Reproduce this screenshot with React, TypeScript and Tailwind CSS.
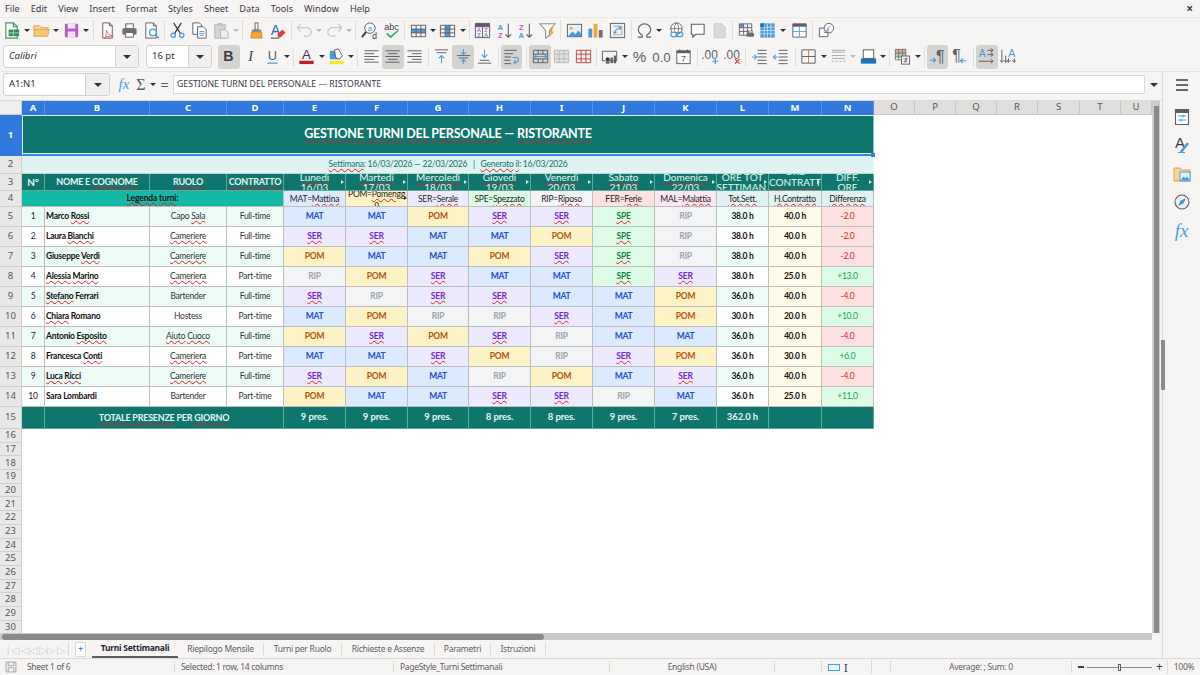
import type { ReactNode } from "react";

const gray = "#5e5c64";
const blue = "#4a9bdc";

const p = (d: string, c = gray, w = 1.2, f = "none") => <path d={d} stroke={c} strokeWidth={w} fill={f} />;
const lbl = (s: string, x: number, y: number, size: number, c = gray, weight = 400, style = "normal") => (
  <text x={x} y={y} fontSize={size} fill={c} fontWeight={weight} fontStyle={style} fontFamily="Liberation Sans, sans-serif" textAnchor="middle">
    {s}
  </text>
);
const table = (c = gray) => p("M2.5 4.5h15v12h-15zM2.5 8.5h15M2.5 12.5h15M7.5 4.5v12M12.5 4.5v12", c, 1);

const icons: Record<string, ReactNode> = {
  new: (
    <>
      {p("M4 2h8l4 4v12H4zM12 2v4h4", "#3d9a5f", 1.2, "#fff")}
      <rect x="7" y="9" width="11" height="7" fill="#2f8f57" />
      {p("M7 12.5h11M12 9v7", "#bfe6cc", 0.8)}
    </>
  ),
  open: (
    <>
      {p("M2 5h6l2 2h7v3H2z", "#e3a23c", 1, "#f8d49a")}
      {p("M2 16l1-7h15l-1.500 7z", "#e3a23c", 1, "#f9c77c")}
    </>
  ),
  save: (
    <>
      <rect x="3" y="3" width="14" height="14" rx="1" fill="#b45fc6" />
      <rect x="6" y="3" width="8" height="5" fill="#f6e3fa" />
      <rect x="6" y="11" width="8" height="6" fill="#f6e3fa" />
    </>
  ),
  pdf: (
    <>
      {p("M5 2h7l3 3v13H5zM12 2v3h3", gray, 1, "#fff")}
      {p("M9 10c1 3 3 5 7 6-3 0-6 0-9 2 1-2 2-5 2-8z", "#d9534f", 0.9)}
    </>
  ),
  print: (
    <>
      <rect x="6" y="3" width="8" height="5" fill="#fff" stroke={gray} />
      <rect x="2.500" y="7.500" width="15" height="7" rx="1.500" fill="#6a7078" />
      <rect x="6" y="12" width="8" height="5" fill="#fff" stroke={gray} />
    </>
  ),
  preview: (
    <>
      {p("M4 2h8l3 3v13H4zM12 2v3h3", gray, 1, "#fff")}
      <circle cx="11.500" cy="12" r="3.500" fill="#fff" stroke={blue} strokeWidth="1.300" />
      {p("M14 14.500l3.500 3.500", blue, 1.700)}
    </>
  ),
  cut: (
    <>
      {p("M6 2l7 11M14 2L7 13", "#3d3846", 1.300)}
      <circle cx="5.500" cy="15" r="2.300" fill="none" stroke={blue} strokeWidth="1.300" />
      <circle cx="14.500" cy="15" r="2.300" fill="none" stroke={blue} strokeWidth="1.300" />
    </>
  ),
  copy: (
    <>
      {p("M3 2h7l2 2v10H3z", gray, 1, "#fff")}
      {p("M8 6h6l3 3v9H8z", gray, 1, "#fff")}
      {p("M10 11h5M10 13h5M10 15h5", blue, 1)}
    </>
  ),
  paste: (
    <>
      <rect x="3" y="4" width="11" height="14" fill="#d5d5d5" stroke="#b5b5b5" />
      <rect x="6" y="2" width="5" height="3" fill="#c0c0c0" />
      <path d="M9 9h5l3 3v6H9z" fill="#eeeeee" stroke="#b5b5b5" />
    </>
  ),
  clone: (
    <>
      <rect x="8.500" y="2" width="3" height="7" fill="#fff" stroke={gray} />
      <rect x="5" y="9" width="10" height="2.500" fill="#8a8a8a" />
      <path d="M5 11.500h10l1 6.500H4z" fill="#f2a93b" stroke="#c87f14" strokeWidth="0.800" />
    </>
  ),
  clear: (
    <>
      {lbl("A", 8, 15, 15, "#2f6fb0")}
      <path d="M10 14l5-5 3.500 3-5 5h-3z" fill="#e0403c" />
      {p("M3 18h9", "#3d3846", 1)}
    </>
  ),
  undo: p("M6 3L2.500 7 6 11M3 7h9c3 0 5 2 5 4.500S15 16 12 16H9", "#c9c9c9", 1.400),
  redo: p("M14 3l3.500 4L14 11M17 7H8c-3 0-5 2-5 4.500S5 16 8 16h3", "#c9c9c9", 1.400),
  find: (
    <>
      <circle cx="10.500" cy="7.500" r="5.500" fill="#fff" stroke={gray} />
      {lbl("a", 10.500, 10.500, 8, "#3584e4")}
      {p("M6.500 11.500L2 17", "#3d3846", 2)}
      {lbl("d", 15.500, 18.500, 9, "#3d3846")}
    </>
  ),
  spell: (
    <>
      {lbl("abc", 10, 9, 9.500, "#3d3846")}
      {p("M5 13l4 4 8-7", "#2ea567", 1.600)}
    </>
  ),
  rows: (
    <>
      <rect x="2.500" y="8.500" width="15" height="4" fill={blue} />
      {table()}
    </>
  ),
  cols: (
    <>
      <rect x="7.500" y="4.500" width="5" height="12" fill={blue} />
      {table()}
    </>
  ),
  sort: (
    <>
      {p("M2.500 2.500h15v15h-15zM2.500 6h15M10 6v11.500", gray, 1)}
      <rect x="2.500" y="2.500" width="15" height="3.500" fill="#5e5c64" />
      {lbl("A", 6.300, 11.500, 6, "#c061cb", 700)}
      {lbl("Z", 6.300, 17, 6, "#4a9bdc", 700)}
      {lbl("Z", 13.800, 11.500, 6, "#c061cb", 700)}
      {lbl("A", 13.800, 17, 6, "#4a9bdc", 700)}
    </>
  ),
  asc: (
    <>
      {lbl("A", 5.500, 9, 8, blue, 700)}
      {lbl("Z", 5.500, 18, 8, "#c061cb", 700)}
      {p("M14 3v14M11 14l3 3 3-3", gray, 1.100)}
    </>
  ),
  desc: (
    <>
      {lbl("Z", 5.500, 9, 8, "#c061cb", 700)}
      {lbl("A", 5.500, 18, 8, blue, 700)}
      {p("M14 3v14M11 14l3 3 3-3", gray, 1.100)}
    </>
  ),
  filter: (
    <>
      {p("M2 3h16l-6 7v5l-4 3v-8z", "#8f8f8f", 1.100, "#fff")}
      <path d="M14 7l-3 5h2.500L12 17l5-6h-2.500l1.500-4z" fill="#f0a030" />
    </>
  ),
  image: (
    <>
      <rect x="2.500" y="3.500" width="15" height="13" fill="#e4f1fb" stroke={gray} />
      <circle cx="6.500" cy="7.500" r="1.600" fill="#f2b33d" />
      <path d="M3 16l5-5 3 3 3-4 3.500 4v2z" fill={blue} />
    </>
  ),
  chart: (
    <>
      <rect x="2.500" y="8" width="4" height="9.500" fill={blue} />
      <rect x="8" y="3" width="4" height="14.500" fill="#f2a93b" />
      <rect x="13.500" y="9.500" width="4" height="8" fill="#6a7078" />
    </>
  ),
  pivot: (
    <>
      <rect x="2.500" y="2.500" width="15" height="15" fill="#f2f2f2" stroke={gray} />
      {p("M5.500 5.500h9v9h-9", "#a8a8a8", 1)}
      {p("M7 13c0-3 2-5 6-6M11 5.500L13.500 7 12 9.500M7 13l2-1.500M7 13l-1.500-2", blue, 1.100)}
    </>
  ),
  omega: p("M3 17h4.500v-2.200C5 13.500 3.500 11.300 3.500 9c0-3.500 3-6 6.500-6s6.500 2.500 6.500 6c0 2.300-1.500 4.500-4 5.800V17H17", gray, 1.200),
  link: (
    <>
      <circle cx="10" cy="8" r="6" fill="#fff" stroke={gray} />
      {p("M4 8h12M10 2c-3 3-3 9 0 12M10 2c3 3 3 9 0 12", gray, 0.800)}
      <rect x="4" y="12" width="7" height="4.500" rx="2.200" fill="#fff" stroke={blue} strokeWidth="1.300" />
      <rect x="9.500" y="12" width="7" height="4.500" rx="2.200" fill="none" stroke={blue} strokeWidth="1.300" />
    </>
  ),
  comment: p("M3.500 3.500h13.500v10.500H8L5 17v-3H3.500z", gray, 1.100, "#fff"),
  hdr: <path d="M4.500 3h8l3.500 3.500V17.500h-11.500z" fill="#d9d9d9" stroke="#c6c6c6" />,
  area: (
    <>
      <rect x="2.500" y="3" width="4.500" height="4" fill={blue} />
      {p("M2.500 3h13v12h-13zM2.500 7h13M2.500 11h13M7 3v12M11 3v12", gray, 0.900)}
      <rect x="10" y="12.500" width="8" height="4" rx="1" fill="#6a7078" />
      <rect x="12" y="10.500" width="4" height="2" fill="#fff" stroke={gray} strokeWidth="0.700" />
    </>
  ),
  freeze: (
    <>
      <rect x="2.500" y="2.500" width="15" height="15" fill="#4a9bdc" />
      {p("M2.500 6.500h15M2.500 10h15M2.500 13.500h15M6.500 2.500v15M10 2.500v15M13.500 2.500v15", "#cfe6f7", 0.800)}
      <rect x="2.500" y="2.500" width="4" height="4" fill="#1c71b8" />
    </>
  ),
  split: (
    <>
      {p("M3 3h14v14H3z", gray, 1, "#fff")}
      <rect x="3" y="3" width="14" height="3" fill="#5e5c64" />
      {p("M3 11h14M10 6v11", blue, 0.900)}
    </>
  ),
  shapes: (
    <>
      {p("M2.500 7.500h9v9h-9z", gray, 1, "#fff")}
      <circle cx="12.500" cy="7.500" r="5" fill="#fff" stroke={gray} />
      {p("M11.500 7.500v4.500H7.500", gray, 0.900)}
      {p("M9.500 10l5-5", blue, 1)}
    </>
  ),
  bold: lbl("B", 10, 15, 15, "#3d3846", 700),
  italic: <text x="10" y="15" fontSize="15" fill="#3d3846" fontStyle="italic" fontFamily="Liberation Serif, serif" textAnchor="middle">I</text>,
  under: (
    <>
      {lbl("U", 10, 14, 13.500, gray)}
      {p("M4.500 17h11", blue, 1.300)}
    </>
  ),
  color: (
    <>
      {lbl("A", 10, 13, 14, "#3d3846")}
      <rect x="2.500" y="14.500" width="15" height="3.500" fill="#c01c28" />
    </>
  ),
  bg: (
    <>
      <path d="M3 4h8v9H3z" fill="#4a9bdc" />
      <path d="M8 3l4-1 4 7-3 4-4-2z" fill="#fff" stroke={gray} />
      <rect x="2.500" y="14.500" width="15" height="3.500" fill="#f6e82c" />
    </>
  ),
  left: p("M2.500 4h15M2.500 7h10M2.500 10h15M2.500 13h10M2.500 16h15", gray, 1),
  center: p("M2.500 4h15M5 7h10M2.500 10h15M5 13h10M2.500 16h15", gray, 1),
  right: p("M2.500 4h15M7.500 7h10M2.500 10h15M7.500 13h10M2.500 16h15", gray, 1),
  top: (
    <>
      {p("M3 3h14M5 6h10", gray, 1)}
      {p("M10 17V9M7 12l3-3 3 3", blue, 1.100)}
    </>
  ),
  mid: (
    <>
      {p("M3 9h14M5 11.500h10", gray, 1)}
      {p("M10 2v6M7.500 5.500L10 8l2.500-2.500M10 18v-5M7.500 15.500L10 13l2.500 2.500", blue, 1.100)}
    </>
  ),
  bottom: (
    <>
      {p("M5 14h10M3 17h14", gray, 1)}
      {p("M10 3v8M7 8l3 3 3-3", blue, 1.100)}
    </>
  ),
  wrap: (
    <>
      {p("M2.500 3.500h13M2.500 7h9M2.500 10.500h7M2.500 14h6M2.500 17.500h7", gray, 1)}
      {p("M11 11h4c3 0 3 5 0 5h-2M14.500 14l-2 2 2 2", blue, 1.100)}
    </>
  ),
  merge: (
    <>
      {p("M2.500 3.500h15v13h-15zM2.500 7.500h15M2.500 12.500h15M7.500 3.500v4M12.500 3.500v4M7.500 12.500v4M12.500 12.500v4", gray, 1)}
      {p("M3.500 10h13M6 8l-2.500 2L6 12M14 8l2.500 2-2.500 2", blue, 1.100)}
    </>
  ),
  mergeOff: p("M2.500 3.500h15v13h-15zM2.500 7.500h15M2.500 12.500h15M7.500 3.500v13M12.500 3.500v13", "#b8b8b8", 1, "#dedede"),
  unmerge: p("M2.500 3.500h15v13h-15zM2.500 7.500h15M2.500 12.500h15M7.500 3.500v13M12.500 3.500v13", "#c6433f", 1),
  cash: (
    <>
      {p("M1.500 4.500h15v10H9", gray, 1)}
      {p("M1.500 4.500v10h3", gray, 1)}
      <circle cx="7" cy="13" r="2.200" fill="#3d3846" />
      <rect x="10" y="11" width="2.500" height="6" fill="#5e5c64" />
      <rect x="13.500" y="9" width="2.500" height="8" fill="#5e5c64" />
      <rect x="5" y="15" width="4" height="2.500" fill="#5e5c64" />
    </>
  ),
  pct: lbl("%", 10, 16, 16, gray),
  num: lbl("0.0", 10, 15.500, 14, gray),
  date: (
    <>
      <rect x="3" y="4" width="14" height="13.500" fill="#fff" stroke={gray} />
      <rect x="3" y="4" width="14" height="2.500" fill="#5e5c64" />
      {p("M6 2.500v3M14 2.500v3", gray, 1)}
      {lbl("7", 10, 15.500, 9.500, gray)}
    </>
  ),
  decUp: (
    <>
      {lbl(".00", 9, 13, 12.500, gray)}
      {p("M15 12v6M12 15h6", blue, 1.300)}
    </>
  ),
  decDown: (
    <>
      {lbl(".00", 9, 13, 12.500, gray)}
      {p("M12.500 12.500l5 5M17.500 12.500l-5 5", "#e0403c", 1.300)}
    </>
  ),
  indent: (
    <>
      {p("M8 3.500h9.500M8 7h9.500M8 10.500h9.500M8 14h9.500M8 17.500h9.500", gray, 1)}
      {p("M2 10.500h4.500M4.500 8l2.500 2.500L4.500 13", blue, 1.100)}
    </>
  ),
  outdent: (
    <>
      {p("M8 3.500h9.500M8 7h9.500M8 10.500h9.500M8 14h9.500M8 17.500h9.500", gray, 1)}
      {p("M7 10.500H2.500M5 8l-2.500 2.500L5 13", blue, 1.100)}
    </>
  ),
  borders: (
    <>
      {p("M3 3h14v14H3z", gray, 1)}
      {p("M10 3v14", "#d08040", 1)}
      {p("M3 10h14", gray, 1)}
    </>
  ),
  bstyle: p("M3 3.500h14M3 5.500h14M3 9h14M3 12h14M3 15h2M7 15h2M11 15h2M15 15h2", "#a8a8a8", 1),
  bcolor: (
    <>
      <rect x="4.500" y="3" width="11" height="9" fill="#fff" stroke={gray} />
      <rect x="2" y="12" width="16" height="5.500" fill="#1c71b8" />
    </>
  ),
  cond: (
    <>
      <rect x="2.500" y="2.500" width="11" height="4" fill="#e9a6a3" />
      <rect x="2.500" y="6.500" width="11" height="4" fill="#a9d8b5" />
      {p("M2.500 2.500h11v11h-11zM2.500 6.500h11M2.500 10.500h11M6 2.500v11M10 2.500v11", gray, 0.800)}
      <rect x="9" y="9.500" width="8.500" height="8.500" fill="#fff" stroke={gray} />
      {p("M11 12.500h4.500M11 15h4.500M14.500 11l-2 5.500", gray, 0.900)}
    </>
  ),
  ltr: (
    <>
      {lbl("¶", 13, 16, 17, gray)}
      {p("M2 14h6M5.500 11.500L8 14l-2.500 2.500", blue, 1.200)}
    </>
  ),
  rtl: (
    <>
      {lbl("¶", 7, 15, 17, gray)}
      {p("M17 14.500h-6M13.500 12L11 14.500l2.500 2.500", blue, 1.200)}
    </>
  ),
  txtH: (
    <>
      {lbl("A", 5.500, 10, 11, blue)}
      {p("M11 3.500h6M14.500 1.500l2.500 2-2.500 2M11 8h6M14.500 6l2.500 2-2.500 2M2 15h15M14.500 13l2.500 2-2.500 2", gray, 1)}
    </>
  ),
  txtV: (
    <>
      {lbl("A", 13.500, 10, 11, blue)}
      {p("M3 3v13M1 14l2 2 2-2M7 9v7M5 14l2 2 2-2M16 12v4M14 14l2 2 2-2M10 12v4M8 14l2 2 2-2", gray, 1)}
    </>
  ),
};

const bar1 = "new v open v save v _ | _ pdf print preview | cut copy paste w | clone clear | undo w redo w | _ find spell | rows v cols v | sort asc desc filter | image chart pivot | omega v _ _ link comment hdr | area freeze v _ _ split | shapes".split(" ");
const bar2a = "bold* italic under v | color v bg v | left center* right | top mid* bottom | wrap* _ _ | merge* mergeOff unmerge | cash v pct num date _ | decUp decDown | indent outdent _ | borders v bstyle w bcolor v | cond v | ltr* rtl _ | txtH* txtV".split(" ");

function Bar({ items }: { items: string[] }) {
  return (
    <>
      {items.map((it, i) => {
        if (it === "v" || it === "w")
          return (
            <span key={i} className="w-[8px] flex justify-center shrink-0">
              <span className={`border-x-[3px] border-t-[3px] border-x-transparent ${it === "v" ? "border-t-[#2e3436]" : "border-t-[#b8b8b8]"}`} />
            </span>
          );
        if (it === "|")
          return (
            <span key={i} className="w-[5px] h-[20px] flex justify-center shrink-0">
              <span className="w-px h-full bg-[#e2e0dd]" />
            </span>
          );
        if (it === "_") return <span key={i} className="w-[1px] shrink-0" />;
        const active = it.endsWith("*");
        return (
          <span key={i} className={`w-[21.700px] h-[24px] flex items-center justify-center shrink-0 rounded-[3px] ${active ? "bg-[#d5d3d0]" : ""}`}>
            <svg viewBox="0 0 20 20" className="w-[19px] h-[19px]">
              {icons[it.replace("*", "")]}
            </svg>
          </span>
        );
      })}
    </>
  );
}

function T({ s }: { s: string }) {
  return (
    <>
      {s.split("~").map((part, i) =>
        i % 2 ? (
          <span key={i} className="underline decoration-wavy decoration-[#e01b24] decoration-[0.700px] underline-offset-[1px]">
            {part}
          </span>
        ) : (
          part
        ),
      )}
    </>
  );
}

function Combo({ text, width, btn, italic }: { text: string; width: string; btn: string; italic?: boolean }) {
  return (
    <div className={`${width} h-[23px] flex shrink-0 bg-white border border-[#d4d2cf] rounded-[3px] text-[9.500px] text-[#2e3436]`}>
      <div className={`flex-1 flex items-center pl-[5px] ${italic ? "italic" : ""}`}>{text}</div>
      <div className={`${btn} flex items-center justify-center bg-[#f1f0ee] border-l border-[#d4d2cf] rounded-r-[3px]`}>
        <span className="border-x-[4px] border-t-[4px] border-x-transparent border-t-[#2e3436]" />
      </div>
    </div>
  );
}

const shift: Record<string, string> = {
  MAT: "bg-[#dbeafe] text-[#1d4ed8]",
  POM: "bg-[#fef3c7] text-[#b45309]",
  SER: "bg-[#ede9fe] text-[#6d28d9]",
  SPE: "bg-[#dcfce7] text-[#15803d]",
  RIP: "bg-[#f3f4f6] text-[#9ca3af]",
};

const rows = [
  ["Marco ~Rossi~", "Capo ~Sala~", "Full-time", "MAT MAT POM SER SER SPE RIP", "38.0", "40.0", "-2.0"],
  ["Laura ~Bianchi~", "~Cameriere~", "Full-time", "SER SER MAT MAT POM SPE RIP", "38.0", "40.0", "-2.0"],
  ["Giuseppe ~Verdi~", "~Cameriere~", "Full-time", "POM MAT MAT POM SER SPE RIP", "38.0", "40.0", "-2.0"],
  ["~Alessia~ ~Marino~", "~Cameriera~", "Part-time", "RIP POM SER MAT MAT SPE SER", "38.0", "25.0", "+13.0"],
  ["~Stefano~ Ferrari", "Bartender", "Full-time", "SER RIP SER SER MAT MAT POM", "36.0", "40.0", "-4.0"],
  ["~Chiara~ Romano", "Hostess", "Part-time", "MAT POM RIP RIP SER MAT POM", "30.0", "20.0", "+10.0"],
  ["Antonio ~Esposito~", "~Aiuto~ ~Cuoco~", "Full-time", "POM SER POM SER RIP MAT MAT", "36.0", "40.0", "-4.0"],
  ["Francesca ~Conti~", "~Cameriera~", "Part-time", "MAT MAT SER POM RIP SER POM", "36.0", "30.0", "+6.0"],
  ["~Luca~ ~Ricci~", "~Cameriere~", "Full-time", "SER POM MAT RIP POM MAT SER", "36.0", "40.0", "-4.0"],
  ["Sara Lombardi", "Bartender", "Part-time", "POM MAT MAT SER SER RIP MAT", "36.0", "25.0", "+11.0"],
];

const heads = [
  ["~Lunedì~", "16/03"],
  ["~Martedì~", "17/03"],
  ["~Mercoledì~", "18/03"],
  ["~Giovedì~", "19/03"],
  ["~Venerdì~", "20/03"],
  ["~Sabato~", "21/03"],
  ["~Domenica~", "22/03"],
  ["ORE TOT", "SETTIMAN."],
  ["ORE", "~CONTRATT~", "."],
  ["DIFF.", "ORE"],
];

const legend = [
  ["MAT=~Mattina~", "bg-[#dbeafe]"],
  ["POM=~Pomerigg~ o", "bg-[#fef3c7]"],
  ["SER=~Serale~", "bg-[#ede9fe]"],
  ["SPE=~Spezzato~", "bg-[#dcfce7]"],
  ["RIP=~Riposo~", "bg-[#f3f4f6]"],
  ["FER=~Ferie~", "bg-[#fee2e2]"],
  ["MAL=~Malattia~", "bg-[#fce7f3]"],
  ["~Tot.Sett.~", "bg-[#e0f2f1]"],
  ["~H.Contratto~", "bg-[#e0f2f1]"],
  ["~Differenza~", "bg-[#e0f2f1]"],
];

const totals = ["9 pres.", "9 pres.", "9 pres.", "8 pres.", "8 pres.", "9 pres.", "7 pres.", "362.0 h", "", ""];

const cell = "flex items-center justify-center overflow-hidden border-r border-b border-[#bdbdbd]";
const hcell = "flex items-center justify-center overflow-hidden border-r border-b border-[#5fa79d] bg-[#0f766e] text-[#e6f6f3]";

function RowNo({ n, active }: { n: number; active?: boolean }) {
  return (
    <div className={`col-start-1 flex items-center justify-center border-r border-b text-[9.500px] tracking-normal font-['Noto_Sans',sans-serif] ${active ? "bg-[#3078dc] border-[#3078dc] text-white font-bold" : "bg-[#e8e8e7] border-[#cfcfcf] text-[#555]"}`}>
      {n}
    </div>
  );
}

function Sheet() {
  return (
    <div className="flex-1 relative bg-white overflow-hidden font-[Lato,sans-serif] text-[8.500px] tracking-[-0.250px] grid grid-cols-[22px_23px_105px_77px_57px_62px_62px_61px_62px_62px_62px_62px_52px_53px_52px_41px_41px_41px_41px_42px_41px_31px] grid-rows-[14px_41px_18px_17px_16px_repeat(10,20px)_22px_repeat(15,13.700px)]">
      <div className="bg-[#efeeec] border-r border-b border-[#cfcfcf]" />
      {"ABCDEFGHIJKLMN".split("").map((c) => (
        <div key={c} className="flex items-center justify-center bg-[#3078dc] border-r border-[#5a94e4] text-white text-[9.500px] tracking-normal font-bold font-['Noto_Sans',sans-serif]">
          {c}
        </div>
      ))}
      {"OPQRSTU".split("").map((c) => (
        <div key={c} className="flex items-center justify-center bg-[#e0dfdd] border-r border-b border-[#c8c8c8] text-[#555] text-[9.500px] tracking-normal font-['Noto_Sans',sans-serif]">
          {c}
        </div>
      ))}

      <RowNo n={1} active />
      <div className="col-span-14 relative flex items-center justify-center pb-[2px] bg-[#0f766e] border-t border-l border-r border-b-2 border-t-[#d9f2ee] border-l-[#d9f2ee] border-r-[#7cc4ea] border-b-[#3584e4] shadow-[inset_0_-1px_0_#d9f2ee] text-white text-[12.500px] tracking-[-0.200px] font-bold">
        <span>
          <T s="~GESTIONE~ ~TURNI~ ~DEL~ ~PERSONALE~ — ~RISTORANTE~" />
        </span>
        <span className="absolute -right-[2px] -bottom-[3px] w-[4px] h-[4px] bg-[#3584e4]" />
      </div>

      <RowNo n={2} />
      <div className="col-span-14 flex items-center justify-center bg-[#e0f2f1] border-b border-[#bcd9d5] text-[#0f766e] whitespace-pre">
        <span>
          <T s="~Settimana~: 16/03/2026 — 22/03/2026   |   ~Generato~ ~il~: 16/03/2026" />
        </span>
      </div>

      <RowNo n={3} />
      <div className={`${hcell} text-[10px] font-bold`}>N°</div>
      <div className={`${hcell} text-[9px] font-bold`}>
        <span>
          NOME E <T s="~COGNOME~" />
        </span>
      </div>
      <div className={`${hcell} text-[9px] font-bold`}>
        <T s="~RUOLO~" />
      </div>
      <div className={`${hcell} text-[9px] font-bold`}>
        <T s="~CONTRATTO~" />
      </div>
      {heads.map((h, i) => (
        <div key={i} className={`${hcell} relative flex-col text-[10px] tracking-normal leading-[10.500px]`}>
          {h.map((line, j) => (
            <span key={j} className="shrink-0 whitespace-nowrap">
              <T s={line} />
            </span>
          ))}
          <span className="absolute right-[1px] top-[6px] border-y-[2.500px] border-l-[3px] border-y-transparent border-l-[#cfe9e5]" />
        </div>
      ))}

      <RowNo n={4} />
      <div className={`${cell} col-span-4 bg-[#14b8a6] border-[#6fcfc2] text-[#111] tracking-[-0.150px] font-bold`}>
        <span>
          <T s="~Legenda~ ~turni~:" />
        </span>
      </div>
      {legend.map(([t, bg], i) => (
        <div key={i} className={`${cell} ${bg} relative flex-col text-[#1c1c1c] leading-[10px]`}>
          {t.split(" ").map((part, j) => (
            <span key={j} className="shrink-0 whitespace-nowrap">
              <T s={part} />
            </span>
          ))}
          {i === 1 && <span className="absolute right-0 top-[5px] border-y-[2.500px] border-l-[3px] border-y-transparent border-l-[#333]" />}
        </div>
      ))}

      {rows.map((r, i) => {
        const stripe = i % 2 === 0 ? "bg-[#edfcf7]" : "bg-white";
        return [
          <RowNo key={`n${i}`} n={i + 5} />,
          <div key={`a${i}`} className={`${cell} ${stripe} text-[#222]`}>
            {i + 1}
          </div>,
          <div key={`b${i}`} className={`${cell} ${stripe} justify-start pl-[1px] text-[#111] font-bold`}>
            <span>
              <T s={r[0]} />
            </span>
          </div>,
          <div key={`c${i}`} className={`${cell} ${stripe} text-[#333]`}>
            <span>
              <T s={r[1]} />
            </span>
          </div>,
          <div key={`d${i}`} className={`${cell} ${stripe} text-[#333]`}>
            {r[2]}
          </div>,
          ...r[3].split(" ").map((v, j) => (
            <div key={`s${i}-${j}`} className={`${cell} ${shift[v]} font-bold`}>
              {v === "SER" || v === "SPE" ? <T s={`~${v}~`} /> : v}
            </div>
          )),
          <div key={`l${i}`} className={`${cell} ${stripe} text-[#111] font-bold`}>
            {r[4]} h
          </div>,
          <div key={`m${i}`} className={`${cell} bg-[#fefce8] text-[#111] font-bold`}>
            {r[5]} h
          </div>,
          <div key={`x${i}`} className={`${cell} ${r[6].startsWith("-") ? "bg-[#fee2e2] text-[#dc2626]" : "bg-[#dcfce7] text-[#16a34a]"}`}>
            {r[6]}
          </div>,
        ];
      })}

      <RowNo n={15} />
      <div className={hcell} />
      <div className={`${hcell} col-span-3 text-[9px] font-bold`}>
        <span>
          <T s="~TOTALE~ ~PRESENZE~ PER ~GIORNO~" />
        </span>
      </div>
      {totals.map((t, i) => (
        <div key={i} className={`${hcell} text-[9.500px] tracking-[-0.100px] font-bold`}>
          {t}
        </div>
      ))}

      {Array.from({ length: 15 }, (_, i) => (
        <RowNo key={i} n={i + 16} />
      ))}
    </div>
  );
}

const tabs = [
  ["Riepilogo Mensile", "w-[86px]"],
  ["Turni per Ruolo", "w-[78px]"],
  ["Richieste e Assenze", "w-[93px]"],
  ["Parametri", "w-[56px]"],
  ["Istruzioni", "w-[55px]"],
];

export default function App() {
  return (
    <div className="w-[1200px] h-[675px] flex flex-col overflow-hidden bg-[#f6f5f4] text-[#3d3846] font-['Noto_Sans',sans-serif]">
      <div className="h-[18px] flex items-center justify-between shrink-0 pl-[5px] pr-[7px] border-b border-[#ecebe9] text-[9.200px]">
        <div className="flex gap-[11px]">
          {["File", "Edit", "View", "Insert", "Format", "Styles", "Sheet", "Data", "Tools", "Window", "Help"].map((m) => (
            <span key={m}>{m}</span>
          ))}
        </div>
        <span className="text-[12px] font-bold leading-none">×</span>
      </div>

      <div className="h-[26px] flex items-center shrink-0 pl-[1px] pb-[2px]">
        <Bar items={bar1} />
      </div>

      <div className="h-[28px] flex items-center shrink-0 pl-[3px] pb-[2px] border-b border-[#e6e5e3]">
        <Combo text="Calibri" width="w-[136px]" btn="w-[23px]" italic />
        <div className="w-[7px] shrink-0" />
        <Combo text="16 pt" width="w-[66px]" btn="w-[23px]" />
        <div className="w-[6px] shrink-0" />
        <Bar items={bar2a} />
      </div>

      <div className="flex-1 flex min-h-0">
        <div className="flex-1 flex flex-col min-w-0">
          <div className="h-[28px] flex items-center shrink-0 pl-[3px] pb-[3px]">
            <Combo text="A1:N1" width="w-[107px]" btn="w-[24px]" />
            <span className="w-[28px] text-center font-['Liberation_Serif',serif] italic text-[15px] text-[#4a9bdc]">fx</span>
            <span className="w-[14px] text-center font-['Liberation_Serif',serif] text-[16px] text-[#5e5c64] -ml-[4px]">Σ</span>
            <span className="ml-[2px] border-x-[3px] border-t-[3px] border-x-transparent border-t-[#2e3436]" />
            <span className="w-[17px] text-center text-[15px] text-[#5e5c64]">=</span>
            <div className="flex-1 h-[19px] flex items-center pl-[3px] bg-white border border-[#dcdad7] text-[8.700px] text-[#3d3846]">
              GESTIONE TURNI DEL PERSONALE — RISTORANTE
            </div>
            <span className="w-[17px] flex justify-center">
              <span className="border-x-[4px] border-t-[4px] border-x-transparent border-t-[#2e3436]" />
            </span>
          </div>

          <div className="h-[533px] flex shrink-0 border-t border-[#dcdad7]">
            <Sheet />
            <div className="w-[10px] shrink-0 bg-[#f6f5f4] flex justify-start">
              <div className="w-[8px] h-full bg-[#cdcdcd] flex justify-center pt-[5px]">
                <div className="w-[5px] h-full bg-[#8a8a8a]" />
              </div>
            </div>
          </div>

          <div className="h-[7px] shrink-0 flex items-center bg-[#c9c9c9] mr-[10px]">
            <div className="ml-[2px] w-[542px] h-[6px] rounded-[3px] bg-[#8a8a8a]" />
          </div>

          <div className="h-[18px] shrink-0 flex items-center text-[8.500px] tracking-[-0.250px]">
            <span className="w-[68px] pl-[5px] flex items-center gap-[1px] text-[#cfcfcf] text-[11px] leading-none overflow-hidden whitespace-nowrap">
              |◁ ◁◁ ▷▷ ▷|
            </span>
            <span className="w-px h-[14px] bg-[#dcdad7]" />
            <span className="w-[23px] flex justify-center">
              <span className="w-[11px] h-[15px] flex items-center justify-center bg-white border border-[#dcdad7] text-[#3584e4] text-[8px] font-bold leading-none">+</span>
            </span>
            <span className="w-[86px] h-[18px] flex items-center justify-center shrink-0 border-b-2 border-[#5e5c64] font-bold text-[#241f31]">Turni Settimanali</span>
            {tabs.map(([t, w]) => (
              <span key={t} className={`${w} flex items-center justify-center shrink-0 text-[#5e5c64] border-r border-[#dcdad7]`}>
                {t}
              </span>
            ))}
          </div>
        </div>

        <div className="relative w-[38px] shrink-0 flex flex-col items-center pt-[2px] border-l border-[#dcdad7]">
          <span className="absolute -left-[2px] top-[268px] w-[4px] h-[50px] bg-[#8a8a8a]" />
          <svg viewBox="0 0 20 20" className="w-5 h-5 mt-[1px]">
            {p("M4 5h12M4 10h12M4 15h12", "#3d3846", 1.500)}
          </svg>
          <svg viewBox="0 0 20 20" className="w-5 h-5 mt-[12px]">
            {p("M3.500 2.500h13v15h-13zM3.500 5.500h13", gray, 1.100, "#fff")}
            <rect x="3.500" y="2.500" width="13" height="3" fill="#5e5c64" />
            {p("M6 9h8M6 13h8M11 7.500v3M9 11.500v3", blue, 1)}
          </svg>
          <svg viewBox="0 0 20 20" className="w-5 h-5 mt-[7px]">
            {lbl("A", 8, 14, 15, "#3d3846")}
            {p("M9 18l7-9", blue, 2.500)}
            {p("M6 18.500h7", blue, 1)}
          </svg>
          <svg viewBox="0 0 20 20" className="w-5 h-5 mt-[10px]">
            {p("M2 4h6l2 2h8v11H2z", "#e3a23c", 1, "#f8d49a")}
            <rect x="8" y="8" width="10" height="9" fill="#e4f1fb" stroke={blue} />
            <path d="M8.500 16.500l3-4 2 2 1.500-2 3 4z" fill={blue} />
          </svg>
          <svg viewBox="0 0 20 20" className="w-5 h-5 mt-[8px]">
            <circle cx="10" cy="10" r="7" fill="none" stroke={gray} strokeWidth="1.100" />
            <path d="M14 6l-2.500 5.500L6 14l2.500-5.500z" fill={blue} />
          </svg>
          <span className="mt-[7px] font-['Liberation_Serif',serif] italic text-[19px] leading-[24px] text-[#4a9bdc]">fx</span>
        </div>
      </div>

      <div className="h-[17px] shrink-0 flex items-center border-t border-[#dcdad7] text-[8.500px] tracking-[-0.300px] text-[#5e5c64]">
        <span className="w-[22px] flex justify-center shrink-0">
          <svg viewBox="0 0 20 20" className="w-[14px] h-[14px]">
            {p("M3 3h14v14H3zM6 3v5h8V3M6 17v-6h8v6", "#9a9a9a", 1.200)}
          </svg>
        </span>
        <span className="w-[153px] pl-[5px] shrink-0 border-r border-[#dcdad7]">Sheet 1 of 6</span>
        <span className="w-[219px] pl-[6px] shrink-0 border-r border-[#dcdad7]">Selected: 1 row, 14 columns</span>
        <span className="w-[216px] pl-[6px] shrink-0 border-r border-[#dcdad7]">PageStyle_Turni Settimanali</span>
        <span className="w-[165px] text-center shrink-0 border-r border-[#dcdad7]">English (USA)</span>
        <span className="w-[47px] shrink-0 border-r border-[#dcdad7]">&nbsp;</span>
        <span className="w-[50px] h-[14px] flex items-center pl-[6px] gap-[4px] shrink-0 border-r border-[#dcdad7]">
          <span className="w-[12px] h-[7px] bg-[#e9f3fb] border border-[#4a9bdc]" />
          <span className="text-[11px] leading-none text-[#3d3846]">I</span>
        </span>
        <span className="w-[19px] shrink-0 border-r border-[#dcdad7]">&nbsp;</span>
        <span className="w-[181px] text-center shrink-0 border-r border-[#dcdad7]">Average: ; Sum: 0</span>
        <span className="w-[96px] h-[14px] flex items-center pl-[6px] shrink-0 border-r border-[#dcdad7]">
          <span className="w-[6px] h-[2px] bg-[#3d3846]" />
          <span className="relative ml-[3px] mr-[4px] w-[65px] h-px bg-[#8a8a8a]">
            <span className="absolute left-[31px] -top-[3px] w-[3px] h-[7px] bg-[#f6f5f4] border border-[#5e5c64]" />
          </span>
          <span className="text-[12px] leading-none text-[#3d3846]">+</span>
        </span>
        <span className="flex-1 text-center">100%</span>
      </div>
    </div>
  );
}
